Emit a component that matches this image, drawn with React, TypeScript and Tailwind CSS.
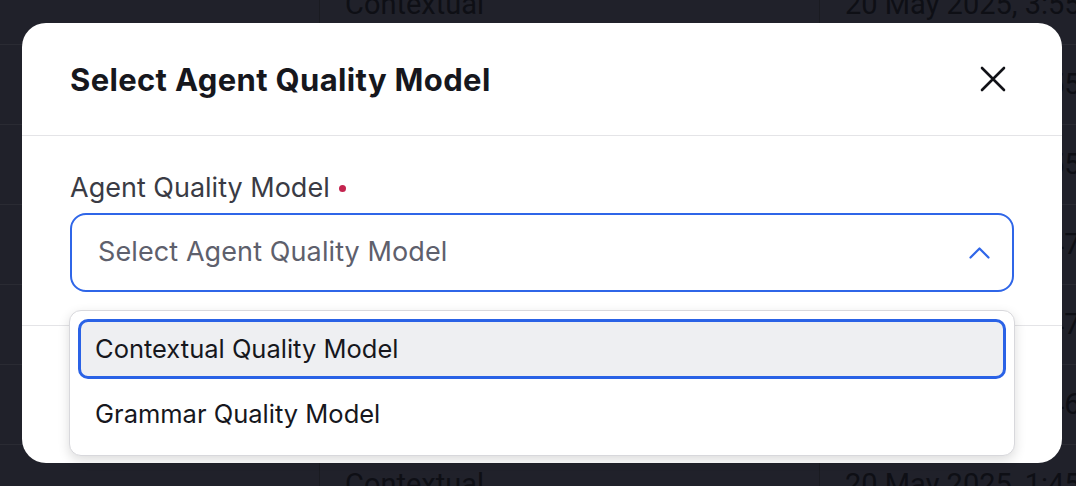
import React from "react";

const rows = [
  { type: "Contextual", date: "20 May 2025, 3:55 PM" },
  { type: "Contextual", date: "20 May 2025, 3:55 PM" },
  { type: "Contextual", date: "20 May 2025, 3:55 PM" },
  { type: "Contextual", date: "20 May 2025, 2:47 PM" },
  { type: "Contextual", date: "20 May 2025, 2:47 PM" },
  { type: "Contextual", date: "20 May 2025, 2:46 PM" },
  { type: "Contextual", date: "20 May 2025, 1:45 PM" },
];

export default function App() {
  return (
    <div
      className="relative w-[1076px] h-[486px] overflow-hidden bg-[#20212a]"
      style={{ fontFamily: "Inter, 'Noto Sans', sans-serif" }}
    >
      {/* background table */}
      <div className="flex flex-col mt-[-35px]">
        {rows.map((r, i) => (
          <div key={i} className="flex h-[80px] border-b border-[#2a2b33] shrink-0">
            <div className="w-[320px] shrink-0 border-r border-[#1a1b21]" />
            <div className="w-[500px] shrink-0 border-r border-[#1a1b21] flex items-center pl-[25px] text-[29px] text-[#0e0f15]" style={{ fontFamily: "Roboto, sans-serif" }}>
              {r.type}
            </div>
            <div className="flex-1 min-w-0 overflow-hidden flex items-center pl-[25px] text-[29px] text-[#0e0f15] whitespace-nowrap" style={{ fontFamily: "Roboto, sans-serif" }}>
              {r.date}
            </div>
          </div>
        ))}
      </div>

      {/* modal */}
      <div className="absolute left-[22px] top-[23px] w-[1040px] h-[440px] rounded-[24px] bg-white flex flex-col">
        <div className="h-[113px] shrink-0 flex items-center justify-between pl-[48px] pr-[53px] border-b border-[#e4e4e7]">
          <h2 className="text-[31px] font-bold text-[#16171d] tracking-[0.35px] mt-[3px]">Select Agent Quality Model</h2>
          <button className="w-[32px] h-[32px] flex items-center justify-center">
            <svg width="26" height="26" viewBox="0 0 26 26" fill="none" stroke="#111217" strokeWidth="2.6" strokeLinecap="round">
              <path d="M2 2 L24 24 M24 2 L2 24" />
            </svg>
          </button>
        </div>
        <div className="px-[48px] pt-[36px] pb-[33px] border-b border-[#e4e4e7]">
          <div className="flex items-center gap-[9px] h-[32px]">
            <span className="text-[27px] text-[#3a3b44]">Agent Quality Model</span>
            <span className="w-[7px] h-[7px] rounded-full bg-[#c4244f]" />
          </div>
          <div className="mt-[9px] h-[79px] rounded-[16px] border-2 border-[#2f66e8] flex items-center justify-between pl-[26px] pr-[22px]">
            <span className="text-[27px] text-[#5e606c] tracking-[0.1px]">Select Agent Quality Model</span>
            <svg width="21" height="12" viewBox="0 0 21 12" fill="none" stroke="#2f66e8" strokeWidth="2.2" strokeLinecap="round" strokeLinejoin="round">
              <path d="M1.5 10.5 L10.5 1.5 L19.5 10.5" />
            </svg>
          </div>
        </div>
        <div className="flex-1" />

        {/* dropdown */}
        <div className="absolute left-[47px] top-[287px] w-[946px] h-[146px] rounded-[12px] border border-[#d8d8dc] bg-white shadow-[0_4px_12px_rgba(0,0,0,0.14)] p-[8px] flex flex-col gap-[4px]">
          <div className="h-[60px] rounded-[10px] border-[3px] border-[#2a62e6] bg-[#eeeff2] flex items-center pl-[14px] text-[25.5px] text-[#16171d]">
            Contextual Quality Model
          </div>
          <div className="h-[62px] flex items-center pl-[17px] text-[25.5px] text-[#16171d]">
            Grammar Quality Model
          </div>
        </div>
      </div>
    </div>
  );
}
